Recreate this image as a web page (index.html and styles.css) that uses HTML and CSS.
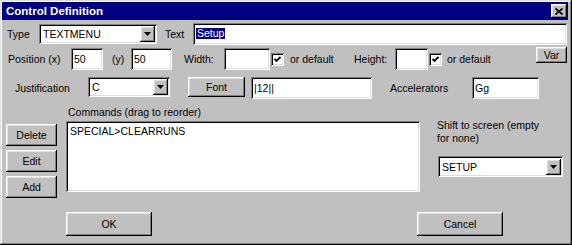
FILE: index.html
```html
<!DOCTYPE html>
<html lang="en">
<head>
    <meta charset="UTF-8">
    <title>Control Definition</title>
    <link rel="stylesheet" href="styles.css">
</head>
<body>
    <div class="window">
        <div class="titlebar">
            <span class="title">Control Definition</span>
            <div class="close raised">
                <svg width="8" height="7" viewBox="0 0 8 7"><path d="M0.5 0.5 L7.5 6.5 M7.5 0.5 L0.5 6.5" stroke="#000" stroke-width="1.7" fill="none"/></svg>
            </div>
        </div>

        <!-- type / text -->
        <div class="row row-type">
            <span class="lbl lbl-type">Type</span>
            <div class="combo sunken combo-type">
                <span class="combo-value">TEXTMENU</span>
                <span class="combo-btn raised"><svg width="7" height="4" viewBox="0 0 7 4"><polygon points="0,0 7,0 3.5,4" fill="#000"/></svg></span>
            </div>
            <span class="lbl lbl-text">Text</span>
            <div class="field sunken field-text"><span class="sel">Setup</span></div>
        </div>

        <!-- position / size -->
        <div class="row row-pos">
            <span class="lbl lbl-posx">Position (x)</span>
            <div class="field sunken field-x">50</div>
            <span class="lbl lbl-posy">(y)</span>
            <div class="field sunken field-y">50</div>
            <span class="lbl lbl-width">Width:</span>
            <div class="field sunken field-width"></div>
            <span class="check sunken"><svg width="7" height="7" viewBox="0 0 7 7"><polyline points="0.5,3 2.5,5 6.5,1" stroke="#000" stroke-width="1.8" fill="none"/></svg></span>
            <span class="lbl lbl-default-w">or default</span>
            <span class="lbl lbl-height">Height:</span>
            <div class="field sunken field-height"></div>
            <span class="check sunken"><svg width="7" height="7" viewBox="0 0 7 7"><polyline points="0.5,3 2.5,5 6.5,1" stroke="#000" stroke-width="1.8" fill="none"/></svg></span>
            <span class="lbl lbl-default-h">or default</span>
            <div class="btn raised btn-var">Var</div>
        </div>

        <!-- justification / font -->
        <div class="row row-just">
            <span class="lbl lbl-just">Justification</span>
            <div class="combo sunken combo-just">
                <span class="combo-value">C</span>
                <span class="combo-btn raised"><svg width="7" height="4" viewBox="0 0 7 4"><polygon points="0,0 7,0 3.5,4" fill="#000"/></svg></span>
            </div>
            <div class="btn raised btn-font">Font</div>
            <div class="field sunken field-font">|12||</div>
            <span class="lbl lbl-accel">Accelerators</span>
            <div class="field sunken field-accel">Gg</div>
        </div>

        <div class="main">
            <div class="side">
                <div class="btn raised side-btn">Delete</div>
                <div class="btn raised side-btn">Edit</div>
                <div class="btn raised side-btn">Add</div>
            </div>
            <div class="center">
                <div class="list-label">Commands (drag to reorder)</div>
                <div class="listbox sunken">SPECIAL&gt;CLEARRUNS</div>
            </div>
            <div class="right">
                <div class="shift-label">Shift to screen (empty<br>for none)</div>
                <div class="combo sunken combo-screen">
                    <span class="combo-value">SETUP</span>
                    <span class="combo-btn raised"><svg width="7" height="4" viewBox="0 0 7 4"><polygon points="0,0 7,0 3.5,4" fill="#000"/></svg></span>
                </div>
            </div>
        </div>

        <div class="footer">
            <div class="btn raised btn-ok">OK</div>
            <div class="btn raised btn-cancel">Cancel</div>
        </div>
    </div>
</body>
</html>
```

FILE: styles.css
```css
* {
    box-sizing: border-box;
}

body {
    margin: 0;
    font-family: "Liberation Sans", Arial, sans-serif;
    font-size: 10.5px;
    color: #000;
    background: #c0c0c0;
}

.window {
    width: 572px;
    height: 245px;
    padding: 2px 4px 2px 2px;
    background: #c0c0c0;
    box-shadow: inset -1px -1px #000, inset 1px 1px #dfdfdf, inset -2px -2px #808080, inset 2px 2px #fff;
}

.raised {
    background: #c0c0c0;
    box-shadow: inset -1px -1px #000, inset 1px 1px #fff, inset -2px -2px #808080, inset 2px 2px #dfdfdf;
}

.sunken {
    background: #fff;
    box-shadow: inset 1px 1px #808080, inset -1px -1px #fff, inset 2px 2px #000, inset -2px -2px #dfdfdf;
}

.titlebar {
    height: 18px;
    background: #000080;
    color: #fff;
    display: flex;
    align-items: center;
    justify-content: space-between;
    padding: 0 1px 0 4px;
}

.title {
    font-weight: bold;
    font-size: 11.5px;
}

.close {
    width: 16px;
    height: 14px;
    display: flex;
    align-items: center;
    justify-content: center;
}

/* form rows */
.row {
    display: flex;
    align-items: center;
}

.row-type {
    margin-top: 2px;
    height: 23px;
    padding-left: 5px;
}

.row-pos {
    margin-top: 2px;
    height: 24px;
    padding-left: 6px;
}

.row-just {
    margin-top: 6px;
    height: 22px;
    padding-left: 13px;
}

.lbl {
    flex: none;
    white-space: nowrap;
}

.lbl-type { width: 32px; }
.lbl-text { width: 28px; margin-left: 8px; }
.lbl-posx { width: 63px; }
.lbl-posy { width: 19px; margin-left: 9px; }
.lbl-width { width: 40px; margin-left: 12px; }
.lbl-default-w { width: 64px; margin-left: 6px; }
.lbl-height { width: 41px; }
.lbl-default-h { width: 89px; margin-left: 5px; }
.lbl-just { width: 73px; }
.lbl-accel { width: 82px; margin-left: 18px; }

.field {
    flex: none;
    height: 22px;
    padding: 0 3px;
    display: flex;
    align-items: center;
    white-space: nowrap;
}

.field-text { width: 374px; }
.field-x { width: 32px; }
.field-y { width: 41px; }
.field-width { width: 46px; }
.field-height { width: 33px; }
.field-font { width: 121px; margin-left: 6px; }
.field-accel { width: 67px; }

.sel {
    background: #000080;
    color: #fff;
    line-height: 11px;
    padding: 0 1px;
}

.combo {
    flex: none;
    height: 20px;
    display: flex;
    align-items: center;
    justify-content: space-between;
    padding: 2px 2px 2px 4px;
}

.combo-type { width: 118px; }

.combo-just {
    width: 82px;
    align-self: flex-start;
}

.combo-btn {
    width: 15px;
    height: 16px;
    display: flex;
    align-items: center;
    justify-content: center;
}

.check {
    flex: none;
    width: 13px;
    height: 13px;
    margin-left: 1px;
    display: flex;
    align-items: center;
    justify-content: center;
}

.btn {
    flex: none;
    display: flex;
    align-items: center;
    justify-content: center;
}

.btn-var {
    width: 31px;
    height: 16px;
    align-self: flex-start;
}

.btn-font {
    width: 57px;
    height: 20px;
    margin-left: 18px;
    align-self: flex-start;
}

/* commands area */
.main {
    display: flex;
    align-items: flex-start;
    margin-top: 1px;
}

.side {
    width: 51px;
    margin-left: 4px;
    margin-top: 24px;
    display: flex;
    flex-direction: column;
    gap: 4px;
}

.side-btn {
    height: 22px;
}

.center {
    width: 354px;
    margin-left: 9px;
}

.list-label {
    margin-top: 6px;
    line-height: 12px;
    padding-left: 2px;
}

.listbox {
    margin-top: 3px;
    height: 71px;
    padding: 4px;
}

.right {
    width: 126px;
    margin-left: 17px;
    margin-top: 19px;
}

.shift-label {
    line-height: 13px;
}

.combo-screen {
    margin-top: 11px;
    margin-left: 1px;
    width: 125px;
    height: 21px;
}

.footer {
    display: flex;
    margin-top: 14px;
}

.btn-ok,
.btn-cancel {
    width: 86px;
    height: 24px;
}

.btn-ok {
    margin-left: 64px;
}

.btn-cancel {
    margin-left: 265px;
}
```
